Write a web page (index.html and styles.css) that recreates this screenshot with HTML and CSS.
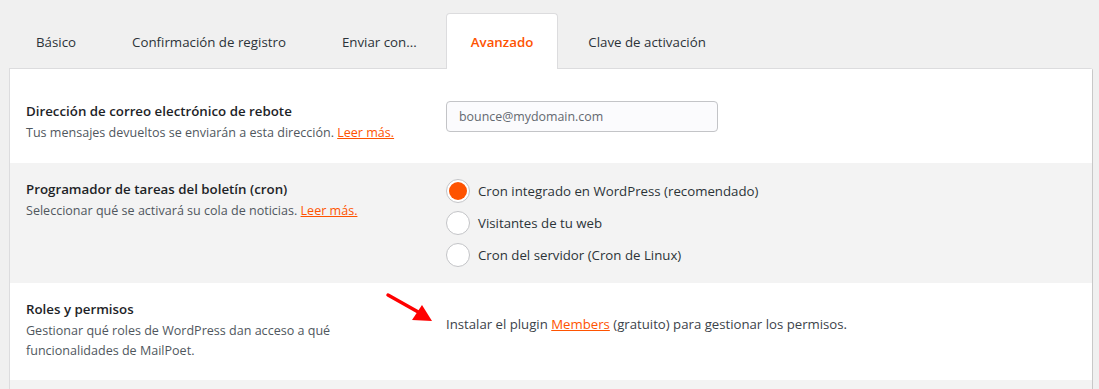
FILE: index.html
```html
<!DOCTYPE html>
<html lang="es">
<head>
<meta charset="utf-8">
<title>Avanzado</title>
<link rel="stylesheet" href="styles.css">
</head>
<body>
<div class="page">
  <nav class="tabs">
    <a class="tab">Básico</a>
    <a class="tab">Confirmación de registro</a>
    <a class="tab">Enviar con...</a>
    <a class="tab active">Avanzado</a>
    <a class="tab">Clave de activación</a>
  </nav>
  <div class="card">
    <div class="row first">
      <div class="label">
        <div class="title">Dirección de correo electrónico de rebote</div>
        <div class="desc">Tus mensajes devueltos se enviarán a esta dirección. <a class="link">Leer más.</a></div>
      </div>
      <div class="field">
        <input class="text-input" type="text" placeholder="bounce@mydomain.com">
      </div>
    </div>
    <div class="row alt">
      <div class="label">
        <div class="title">Programador de tareas del boletín (cron)</div>
        <div class="desc">Seleccionar qué se activará su cola de noticias. <a class="link">Leer más.</a></div>
      </div>
      <div class="field radios">
        <label class="radio"><span class="dot checked"></span>Cron integrado en WordPress (recomendado)</label>
        <label class="radio"><span class="dot"></span>Visitantes de tu web</label>
        <label class="radio"><span class="dot"></span>Cron del servidor (Cron de Linux)</label>
      </div>
    </div>
    <div class="row roles">
      <div class="label">
        <div class="title">Roles y permisos</div>
        <div class="desc">Gestionar qué roles de WordPress dan acceso a qué funcionalidades de MailPoet.</div>
      </div>
      <div class="field plain">
        Instalar el plugin <a class="link">Members</a> (gratuito) para gestionar los permisos.
      </div>
      <svg class="arrow" width="52" height="34" viewBox="0 0 52 34">
        <line x1="4" y1="3" x2="36" y2="21" stroke="#f00" stroke-width="3.5" stroke-linecap="round"/>
        <polygon points="48,29 28,28 38,13" fill="#f00"/>
      </svg>
    </div>
    <div class="row alt last"></div>
  </div>
</div>
</body>
</html>
```

FILE: styles.css
```css
* { box-sizing: border-box; }
html, body { margin: 0; padding: 0; }
body {
  background: #f0f0f0;
  font-family: "Open Sans", "Noto Sans", sans-serif;
  color: #1d2327;
  overflow: hidden;
  height: 389px;
}
.page {
  padding: 13px 6px 0 9px;
}
.tabs {
  display: flex;
  gap: 3px;
  position: relative;
  z-index: 1;
  margin-bottom: -1px;
}
.tab {
  display: flex;
  align-items: center;
  height: 56px;
  padding: 0 25px 0 26px;
  font-size: 13.3px;
  color: #2c3338;
  border: 1px solid transparent;
  border-bottom: none;
  border-radius: 4px 4px 0 0;
}
.tab.active {
  background: #fff;
  border-color: #dcdcde;
  color: #fe5301;
  font-weight: 600;
  padding: 0 24px;
}
.card {
  background: #fff;
  border: 1px solid #dcdcde;
  border-right-color: #c8c8c8;
  border-radius: 0 3px 0 0;
}
.row {
  display: flex;
  padding: 16px 16px 16px;
  background: #fff;
  position: relative;
}
.row.first { padding-top: 32px; padding-bottom: 20px; }
.row.roles { padding-bottom: 19px; }
.row.alt { background: #f3f3f3; }
.row.last { height: 20px; padding: 0; }
.label {
  width: 420px;
  flex: none;
}
.title {
  font-size: 13.3px;
  font-weight: 600;
  line-height: 20px;
  color: #1d2327;
}
.desc {
  font-size: 12.55px;
  line-height: 20px;
  color: #50575e;
  margin-top: 2px;
  max-width: 380px;
}
.link {
  color: #fe5301;
  text-decoration: underline;
}
.field { flex: 1; }
.text-input {
  display: block;
  width: 272px;
  height: 31px;
  border: 1px solid #c3c4c7;
  border-radius: 4px;
  background: #fbfbfd;
  padding: 0 12px;
  font-family: inherit;
  font-size: 12.4px;
  color: #2c3338;
}
.text-input::placeholder { color: #646970; }
.radios {
  display: flex;
  flex-direction: column;
  gap: 8px;
}
.radio {
  display: flex;
  align-items: center;
  gap: 8px;
  font-size: 13.25px;
  color: #2c3338;
  height: 24px;
}
.dot {
  width: 24px;
  height: 24px;
  border-radius: 50%;
  border: 1px solid #c3c4c7;
  background: #fff;
  display: flex;
  align-items: center;
  justify-content: center;
  flex: none;
}
.dot.checked::after {
  content: "";
  width: 18px;
  height: 18px;
  border-radius: 50%;
  background: #fe5301;
}
.plain {
  font-size: 13.2px;
  color: #3c434a;
  line-height: 20px;
  padding-top: 15px;
}
.arrow {
  position: absolute;
  left: 374px;
  top: 9px;
}
```
